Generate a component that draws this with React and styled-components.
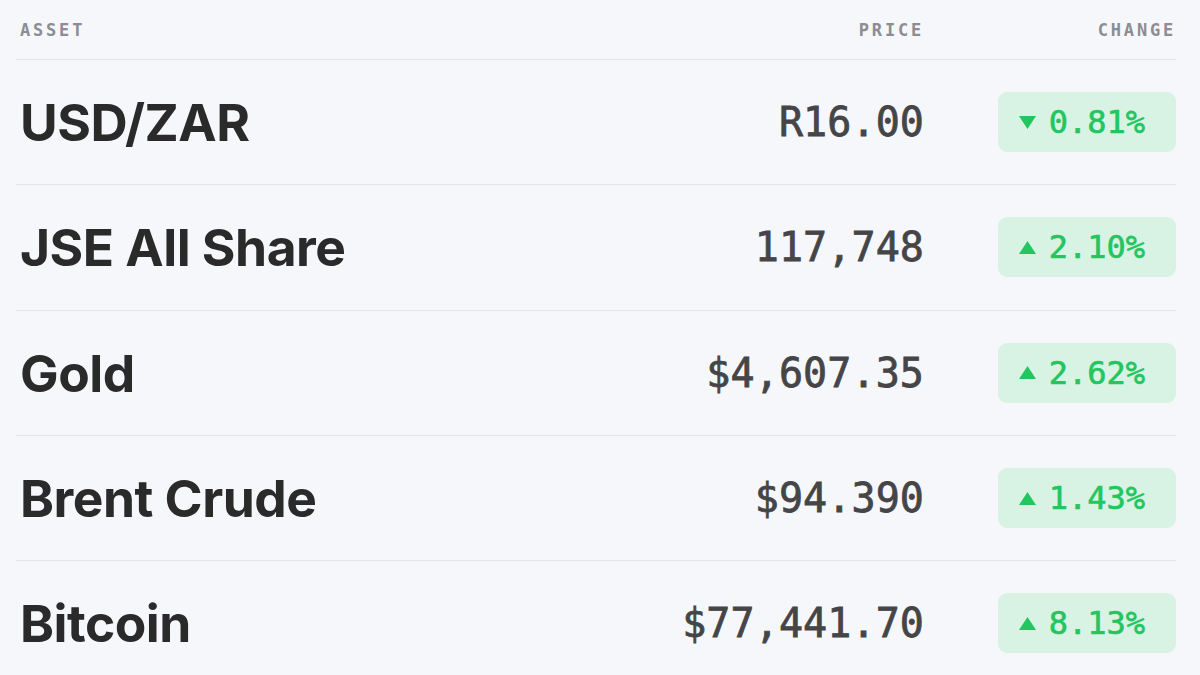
import React from "react";
import styled, { createGlobalStyle } from "styled-components";

const GlobalStyle = createGlobalStyle`
  body {
    margin: 0;
    background: #f6f7fb;
    font-family: "Inter", "Liberation Sans", sans-serif;
  }
`;

const Table = styled.div`
  padding: 0 24px 0 16px;
`;

const Row = styled.div`
  display: grid;
  grid-template-columns: 1fr 320px 178px;
  column-gap: 74px;
  align-items: center;
  height: ${(p) => (p.header ? "59px" : "124.3px")};
  border-bottom: 1px solid #e4e5ea;
`;

const HeadCell = styled.div`
  font-family: "DejaVu Sans Mono", monospace;
  font-size: 17px;
  font-weight: bold;
  letter-spacing: 2.8px;
  color: #8c8c92;
  text-align: ${(p) => (p.right ? "right" : "left")};
  padding-left: 4px;
`;

const Name = styled.div`
  font-size: 51.5px;
  font-weight: 700;
  letter-spacing: -0.5px;
  color: #2a2a2b;
  padding-left: 4px;
`;

const Price = styled.div`
  font-family: "DejaVu Sans Mono", monospace;
  font-size: 40px;
  color: #454547;
  -webkit-text-stroke: 0.8px #454547;
  text-align: right;
  letter-spacing: 0.1px;
`;

const Badge = styled.div`
  height: 60px;
  border-radius: 9px;
  background: #d8f3e3;
  color: #22c55e;
  display: flex;
  align-items: center;
  justify-content: flex-end;
  gap: 13px;
  padding-right: 31px;
  font-family: "DejaVu Sans Mono", monospace;
  font-size: 32px;
  -webkit-text-stroke: 0.6px #22c55e;
`;

const Arrow = ({ down }) => (
  <svg width="17" height="13" viewBox="0 0 17 13">
    <path
      d={down ? "M0 0 H17 L8.5 13 Z" : "M8.5 0 L17 13 H0 Z"}
      fill="#22c55e"
    />
  </svg>
);

const assets = [
  { name: "USD/ZAR", price: "R16.00", change: "0.81%", down: true },
  { name: "JSE All Share", price: "117,748", change: "2.10%" },
  { name: "Gold", price: "$4,607.35", change: "2.62%" },
  { name: "Brent Crude", price: "$94.390", change: "1.43%" },
  { name: "Bitcoin", price: "$77,441.70", change: "8.13%" },
];

const App = () => {
  return (
    <>
      <GlobalStyle />
      <Table>
        <Row header>
          <HeadCell>ASSET</HeadCell>
          <HeadCell right>PRICE</HeadCell>
          <HeadCell right>CHANGE</HeadCell>
        </Row>
        {assets.map((a) => (
          <Row key={a.name}>
            <Name>{a.name}</Name>
            <Price>{a.price}</Price>
            <Badge>
              <Arrow down={a.down} />
              {a.change}
            </Badge>
          </Row>
        ))}
      </Table>
    </>
  );
};

export default App;
